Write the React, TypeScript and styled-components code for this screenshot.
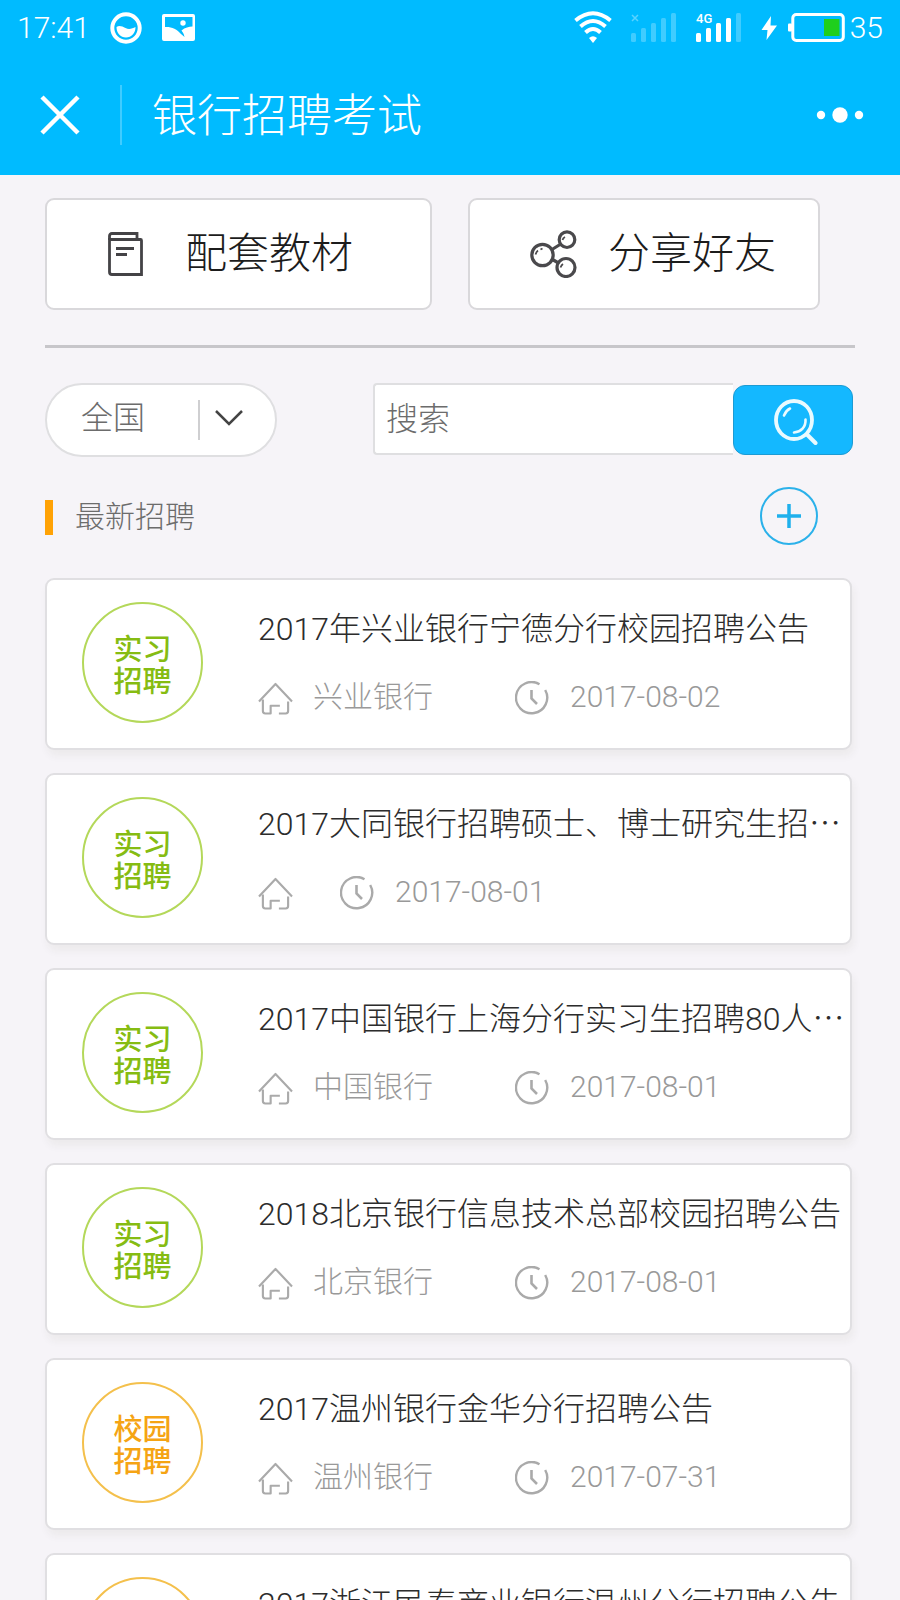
import React from 'react';
import styled, { createGlobalStyle } from 'styled-components';

const fonts = 'Roboto, "Noto Sans CJK SC", sans-serif';

const GlobalStyle = createGlobalStyle`
  * { box-sizing: border-box; }
  body { margin: 0; background: #f6f4f8; font-family: ${fonts}; font-weight: 300; }
  h1, h2, h3, p, ul { margin: 0; padding: 0; font-weight: inherit; }
  button, input, select { font-family: inherit; font-weight: inherit; }
  svg { display: block; flex: none; }
`;

const Screen = styled.div`
  height: 100vh;
  display: flex;
  flex-direction: column;
  overflow: hidden;
`;

const Top = styled.header`
  flex: none;
  background: #00bbff;
  color: #fff;
`;

const StatusBar = styled.div`
  height: 55px;
  padding: 0 17px;
  display: flex;
  align-items: center;
  justify-content: space-between;
  font-size: 30px;
  line-height: 36px;
`;

const StatusGroup = styled.div<{ $gap: number }>`
  display: flex;
  align-items: center;
  gap: ${p => p.$gap}px;
`;

const Charge = styled.div`
  display: flex;
  align-items: center;
  gap: 5px;
  svg:first-child { margin-right: 5px; }
`;

const TitleBar = styled.div`
  height: 120px;
  display: flex;
  align-items: center;
  padding: 0 35px 0 40px;
`;

const PlainButton = styled.button`
  border: 0;
  padding: 0;
  background: none;
  color: inherit;
`;

const Title = styled.h1`
  flex: 1;
  margin-left: 40px;
  padding: 4px 0 0 30px;
  border-left: 2px solid #40ccff;
  font-size: 45px;
  line-height: 56px;
`;

const Main = styled.main`
  flex: 1;
  min-height: 0;
  padding: 23px 45px 0;
  overflow-y: auto;
  scrollbar-width: none;
`;

const Actions = styled.div`
  display: grid;
  grid-template-columns: 11fr 10fr;
  gap: 36px;
  padding: 0 35px 35px 0;
  border-bottom: 3px solid #c7c6ca;
`;

const Action = styled.button`
  height: 112px;
  display: flex;
  align-items: center;
  gap: 30px;
  padding: 0 0 0 60px;
  border: 2px solid #d9d8db;
  border-radius: 9px;
  background: #fff;
  color: #1c1c1c;
  font-size: 42px;
  line-height: 56px;
  white-space: nowrap;
`;

const Filters = styled.form`
  display: flex;
  justify-content: space-between;
  align-items: flex-start;
  gap: 96px;
  padding: 35px 2px 0 0;
`;

const Region = styled.label`
  width: 232px;
  height: 74px;
  flex: none;
  display: flex;
  align-items: center;
  padding-right: 32px;
  border: 2px solid #dfdfe1;
  border-radius: 37px;
  background: #fff;
`;

const RegionSelect = styled.select`
  appearance: none;
  flex: 1;
  min-width: 0;
  height: 66px;
  padding: 0 0 4px 34px;
  border: 0;
  background: none;
  color: #6c6c6c;
  font-size: 32px;
`;

const RegionArrow = styled.span`
  height: 40px;
  display: flex;
  align-items: center;
  padding: 0 0 5px 15px;
  border-left: 2px solid #cfcfd1;
`;

const Search = styled.div`
  flex: 1;
  min-width: 0;
  display: flex;
  align-items: flex-end;
`;

const SearchInput = styled.input`
  flex: 1;
  min-width: 0;
  height: 72px;
  padding: 0 11px;
  border: 2px solid #dfdfe1;
  border-right: 0;
  border-radius: 4px 0 0 4px;
  background: #fff;
  color: #333;
  font-size: 32px;
  &::placeholder { color: #6c6c6c; opacity: 1; }
`;

const SearchButton = styled.button`
  width: 120px;
  height: 70px;
  display: flex;
  align-items: center;
  justify-content: center;
  padding: 5px 0 0 6px;
  border: 1px solid #1d9bd3;
  border-radius: 12px;
  background: #14b8ff;
`;

const SectionHead = styled.div`
  display: flex;
  align-items: center;
  justify-content: space-between;
  padding: 30px 37px 0 0;
`;

const SectionTitle = styled.h2`
  display: flex;
  align-items: center;
  gap: 22px;
  padding-top: 2px;
  color: #6c6c6c;
  font-size: 30px;
  line-height: 40px;
  &::before {
    content: '';
    width: 8px;
    height: 35px;
    background: #ffa205;
  }
`;

const AddButton = styled.button`
  width: 58px;
  height: 58px;
  display: flex;
  align-items: center;
  justify-content: center;
  padding: 0;
  border: 2px solid #2bb1ea;
  border-radius: 50%;
  background: none;
`;

const List = styled.ul`
  list-style: none;
  display: flex;
  flex-direction: column;
  gap: 23px;
  padding: 33px 3px 24px 0;
`;

const Card = styled.li`
  height: 172px;
  display: flex;
  align-items: center;
  padding: 0 0 4px 35px;
  border: 2px solid #e0dfe2;
  border-radius: 9px;
  background: #fff;
  box-shadow: 2px 6px 8px rgba(60, 50, 20, 0.05);
`;

const Badge = styled.div<{ $color: string; $ring: string }>`
  width: 121px;
  height: 121px;
  flex: none;
  display: flex;
  align-items: center;
  justify-content: center;
  padding-top: 8px;
  border: 2px solid ${p => p.$ring};
  border-radius: 50%;
  color: ${p => p.$color};
  font-size: 29px;
  line-height: 32px;
  font-weight: 500;
  text-align: center;
`;

const Info = styled.div`
  flex: 1;
  min-width: 0;
  margin-left: 55px;
`;

const JobTitle = styled.h3`
  overflow-x: clip;
  color: #2c2c2c;
  font-size: 32px;
  line-height: 44px;
  white-space: nowrap;
`;

const Dots = styled.span`
  font-family: "Noto Sans CJK SC", sans-serif;
  line-height: 32px;
`;

const Meta = styled.div`
  display: flex;
  align-items: center;
  margin-top: 26px;
  color: #999;
  font-size: 30px;
  line-height: 40px;
  svg { margin-top: 2px; }
`;

const Org = styled.span`
  margin: 0 27px 0 20px;
  &:not(:empty) { margin-right: 82px; }
`;

const PostDate = styled.time`
  margin-left: 21px;
`;

const BallIcon = () => (
  <svg width="32" height="32" viewBox="0 0 32 32">
    <circle cx="16" cy="16" r="13.7" fill="none" stroke="#fff" strokeWidth="4" />
    <path d="M6.500 15C9 13 12 14 15.500 16C19 18 22.500 16.500 25.500 15C25.500 21 21.500 25.500 16 25.500C10.500 25.500 6.500 21 6.500 15Z" fill="#fff" />
  </svg>
);

const PhotoIcon = () => (
  <svg width="34" height="28" viewBox="0 0 34 28">
    <path fillRule="evenodd" d="M2 0H31Q33 0 33 2V25Q33 27 31 27H2Q0 27 0 25V2Q0 0 2 0ZM3 3V13C9 12.500 15 15 19 20L22.500 23C22 19.500 20.500 18 19.500 16.500C23 13.500 27 12.500 30.500 12.500V3Z" fill="#fff" />
    <circle cx="21" cy="9" r="2.700" fill="#fff" />
  </svg>
);

const WifiIcon = () => (
  <svg width="38" height="33" viewBox="0 0 38 33" fill="none" stroke="#fff" strokeWidth="4">
    <path d="M1.500 9.500Q19-5 36.500 9.500" />
    <path d="M6.500 15.500Q19 4.500 31.500 15.500" />
    <path d="M11.500 21.500Q19 14.500 26.500 21.500" />
    <path d="M15 27Q19 23.500 23 27L19 32Z" fill="#fff" stroke="none" />
  </svg>
);

const barTops = [20, 15, 10, 5, 0];

const SignalIcon = ({ level, tag }: { level: number; tag?: string }) => (
  <svg width="46" height="42" viewBox="0 -6 46 42">
    {barTops.map((top, i) => (
      <rect key={top} x={i * 10} y={top} width="5" height={29 - top} rx="1.500" fill="#fff" opacity={i < level ? 1 : 0.25} />
    ))}
    {tag ? (
      <text x="0" y="10" fill="#fff" fontFamily="Roboto, sans-serif" fontSize="13" fontWeight="500">{tag}</text>
    ) : (
      <path d="M1 2L7 8M7 2L1 8" stroke="#fff" strokeWidth="1.500" opacity="0.35" />
    )}
  </svg>
);

const BoltIcon = () => (
  <svg width="17" height="24" viewBox="0 0 17 24">
    <path d="M10 0L0.500 14H6.500L5.500 24L16 9.500H9.500Z" fill="#fff" />
  </svg>
);

const BatteryIcon = () => (
  <svg width="57" height="29" viewBox="0 0 57 29">
    <rect x="0" y="10.500" width="4" height="8" rx="1" fill="#fff" />
    <rect x="4.800" y="1.500" width="50.500" height="26" rx="3.500" fill="none" stroke="#fff" strokeWidth="3" />
    <rect x="36" y="6" width="15.500" height="17" fill="#1fcf1c" />
  </svg>
);

const CloseIcon = () => (
  <svg width="40" height="40" viewBox="0 0 40 40">
    <path d="M2 2L38 38M38 2L2 38" stroke="#fff" strokeWidth="4.500" />
  </svg>
);

const MoreIcon = () => (
  <svg width="50" height="20" viewBox="0 0 50 20" fill="#fff">
    <circle cx="6" cy="10" r="4.200" />
    <circle cx="25" cy="10" r="7.700" />
    <circle cx="44" cy="10" r="4.200" />
  </svg>
);

const BookIcon = () => (
  <svg width="48" height="46" viewBox="0 0 48 46" fill="none" stroke="#444346" strokeWidth="2.800">
    <path d="M33.500 8.500H2.500V41Q2.500 43.500 5 43.500H34.500V9.500Q34.500 8.500 33.500 8.500Z" />
    <path d="M2.500 9V5Q2.500 2.500 5 2.500H30V8" />
    <path d="M9 17.500H27M9 23.500H20" />
  </svg>
);

const ShareIcon = () => (
  <svg width="48" height="48" viewBox="0 0 48 48" fill="none" stroke="#4a494c" strokeWidth="3.200">
    <circle cx="12.500" cy="25" r="10.700" />
    <circle cx="37" cy="9.700" r="7.800" />
    <circle cx="36" cy="37.500" r="9" />
    <path d="M22 19.500L30 14.500M22.500 29.500L28.500 33" />
    <path d="M5.500 24.500Q6.500 21.500 8 20.500M10.500 19.500L12.500 18.500M32.500 10Q33 8 35 7M30.500 37.500Q31.500 35 33 34" strokeWidth="1.800" />
  </svg>
);

const ChevronIcon = () => (
  <svg width="28" height="16" viewBox="0 0 28 16">
    <path d="M1 1L14 14L27 1" fill="none" stroke="#444" strokeWidth="2.500" />
  </svg>
);

const SearchIcon = () => (
  <svg width="44" height="48" viewBox="0 0 44 48" fill="none" stroke="#e9faff" strokeLinecap="round">
    <ellipse cx="20" cy="21" rx="18" ry="19" strokeWidth="3.800" />
    <path d="M33.500 36L41.500 44" strokeWidth="4" />
    <path d="M10 16.500Q12 11.500 16 9.500M31.500 20.500C32 28 27 33 20 33.500" strokeWidth="2.600" />
  </svg>
);

const PlusIcon = () => (
  <svg width="26" height="26" viewBox="0 0 26 26">
    <path d="M13 1V25M1 13H25" stroke="#1fb0ec" strokeWidth="3.500" />
  </svg>
);

const HomeIcon = () => (
  <svg width="35" height="33" viewBox="0 0 36 34" fill="none" stroke="#aaa" strokeWidth="2.200" strokeLinejoin="round">
    <path d="M1 20L18 2L35 20" />
    <path d="M5 18V30Q5 32.500 7.500 32.500H13V24.500H22.500M31 20V30Q31 32.500 28.500 32.500H21.500" />
  </svg>
);

const ClockIcon = () => (
  <svg width="34" height="34" viewBox="0 0 34 34" fill="none" stroke="#aaa" strokeWidth="2.400">
    <path d="M24.500 3.200A15.600 15.600 0 1 0 30.200 9" />
    <path d="M16.500 9V17.500L22 23" strokeWidth="2.600" />
  </svg>
);

type Job = { kind: '实习' | '校园'; title: string; cut?: boolean; org: string; date: string };

const jobs: Job[] = [
  { kind: '实习', title: '2017年兴业银行宁德分行校园招聘公告', org: '兴业银行', date: '2017-08-02' },
  { kind: '实习', title: '2017大同银行招聘硕士、博士研究生招', cut: true, org: '', date: '2017-08-01' },
  { kind: '实习', title: '2017中国银行上海分行实习生招聘80人', cut: true, org: '中国银行', date: '2017-08-01' },
  { kind: '实习', title: '2018北京银行信息技术总部校园招聘公告', org: '北京银行', date: '2017-08-01' },
  { kind: '校园', title: '2017温州银行金华分行招聘公告', org: '温州银行', date: '2017-07-31' },
  { kind: '校园', title: '2017浙江民泰商业银行温州分行招聘公告', org: '民泰银行', date: '2017-07-31' },
];

const badgeColors = {
  实习: { $color: '#86bc12', $ring: '#b4d85a' },
  校园: { $color: '#f5a414', $ring: '#f4c04c' },
};

const JobCard = ({ job }: { job: Job }) => (
  <Card>
    <Badge {...badgeColors[job.kind]}>
      {job.kind}
      <br />
      招聘
    </Badge>
    <Info>
      <JobTitle>
        {job.title}
        {job.cut && <Dots>…</Dots>}
      </JobTitle>
      <Meta>
        <HomeIcon />
        <Org>{job.org}</Org>
        <ClockIcon />
        <PostDate dateTime={job.date}>{job.date}</PostDate>
      </Meta>
    </Info>
  </Card>
);

export default function App() {
  return (
    <Screen lang="zh-CN">
      <GlobalStyle />
      <Top>
        <StatusBar>
          <StatusGroup $gap={20}>
            <span>17:41</span>
            <BallIcon />
            <PhotoIcon />
          </StatusGroup>
          <StatusGroup $gap={19}>
            <WifiIcon />
            <SignalIcon level={0} />
            <SignalIcon level={4} tag="4G" />
            <Charge>
              <BoltIcon />
              <BatteryIcon />
              <span>35</span>
            </Charge>
          </StatusGroup>
        </StatusBar>
        <TitleBar>
          <PlainButton type="button" aria-label="关闭"><CloseIcon /></PlainButton>
          <Title>银行招聘考试</Title>
          <PlainButton type="button" aria-label="更多"><MoreIcon /></PlainButton>
        </TitleBar>
      </Top>
      <Main>
        <Actions>
          <Action type="button"><BookIcon />配套教材</Action>
          <Action type="button"><ShareIcon />分享好友</Action>
        </Actions>
        <Filters onSubmit={e => e.preventDefault()}>
          <Region>
            <RegionSelect aria-label="地区" defaultValue="全国">
              <option>全国</option>
            </RegionSelect>
            <RegionArrow><ChevronIcon /></RegionArrow>
          </Region>
          <Search>
            <SearchInput type="text" aria-label="搜索" placeholder="搜索" />
            <SearchButton type="submit" aria-label="搜索"><SearchIcon /></SearchButton>
          </Search>
        </Filters>
        <SectionHead>
          <SectionTitle>最新招聘</SectionTitle>
          <AddButton type="button" aria-label="添加"><PlusIcon /></AddButton>
        </SectionHead>
        <List>
          {jobs.map(job => <JobCard key={job.title} job={job} />)}
        </List>
      </Main>
    </Screen>
  );
}
